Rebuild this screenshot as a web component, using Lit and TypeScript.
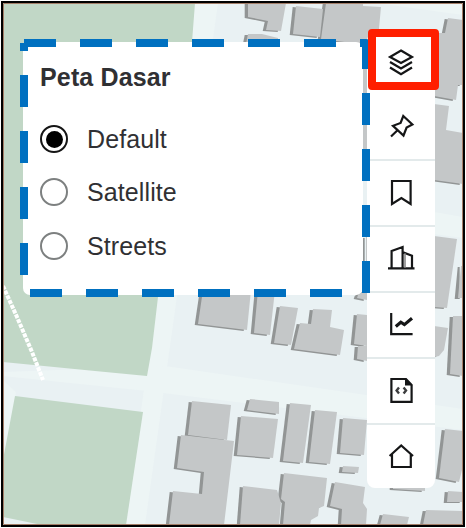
import { LitElement, html, svg, css } from "lit";
import { customElement, state } from "lit/decorators.js";

const BUILDINGS = [
  "248,3 286,3 281,31 266,30 268,21 248,17",
  "296,6 323,9 320,37 293,34",
  "326,3 363,3 363,6 381,7 376,60 367,60 367,152 360,152 360,44 321,39",
  "248,34 262,34 278,38 278,44 246,44",
  "448,18 463,20 463,85 458,85 456,100 434,96 434,33 445,33",
  "434,104 449,106 446,130 463,133 463,184 434,180",
  "434,236 457,239 447,308 434,307",
  "461,266 463,266 463,298 458,298",
  "434,326 448,328 444,350 439,356 434,357",
  "453,316 463,316 463,376 450,374",
  "366,237 368,237 368,262 366,262",
  "358,295 367,289 367,300 357,298",
  "357,314 367,315 367,346 354,344",
  "358,346 367,346 367,361 357,359",
  "203,290 251,290 247,330 198,324",
  "258,290 275,290 270,335 254,333",
  "280,306 298,308 291,345 274,343",
  "313,309 332,310 330,327 344,330 340,355 294,349 300,323 311,324",
  "192,401 231,405 227,440 188,435",
  "181,435 234,441 224,525 169,525 173,491 202,494 204,472 177,468",
  "250,399 279,402 279,414 247,410",
  "241,416 278,419 273,458 237,455",
  "290,403 311,405 303,463 283,461",
  "315,410 337,412 330,464 309,462",
  "343,418 367,420 364,455 340,453",
  "343,466 359,467 358,473 342,472",
  "284,473 327,478 324,506 319,508 318,516 311,520 310,525 283,525 285,502 281,499",
  "243,486 277,490 281,503 279,525 240,525",
  "335,482 365,487 363,503 367,509 366,525 341,525 342,509 330,506",
  "383,514 409,517 407,525 380,525",
  "426,510 463,511 463,525 423,525",
  "445,429 463,431 463,466 459,482 439,478",
  "448,491 463,492 463,502 447,502",
  "393,484 425,487 425,491 393,489",
];

const ICONS = [
  svg`<path d="M15 2.5 26 9 15 15 4 9Z M4 14 15 20.5 26 14 M4 19.5 15 26.2 26 19.5"/>`,
  svg`<path d="M17.3 4 26.4 12.4 20.6 15.6 17.5 23.5 7 13.8 14.6 11Z M5 24.5 11.8 18"/>`,
  svg`<path d="M6 3H24.6V26L15.4 20 6 26Z"/>`,
  svg`<path d="M2 24.4H28.5 M5.6 24V7L16.6 3V24 M17 8.3 26 11.8V24"/><path class="thin" d="M19 9V24"/>`,
  svg`<path d="M5.2 3V24.2H26.6"/><path class="thick" d="M9.8 16.4 14.8 12.2 18.4 14.6 26 8.2"/>`,
  svg`<path d="M5.4 3H20L25.6 9V25.8H5.4Z"/><path class="solid" d="M19 2.5 26.5 9.5H19Z"/><path class="code" d="M13 11.4 10.6 14.4 13 17.4 M17.6 11.4 20 14.4 17.6 17.4"/>`,
  svg`<path d="M3.6 14 15.2 3.4 27 14 M6 12V25H24.8V12"/>`,
];

const BASEMAPS = ["Default", "Satellite", "Streets"];

@customElement("map-canvas")
class MapCanvas extends LitElement {
  static styles = css`
    :host, svg { display: block; }
    .field { fill: #c1d7c6; }
    .road { fill: #edf5f5; }
    .shade { fill: #929595; }
    .block { fill: #c4c7c8; }
    .trail { fill: none; stroke: #fff; stroke-width: 4; stroke-dasharray: 4 1.2; }
  `;

  render() {
    return html`<svg width="466" height="528" viewBox="0 0 466 528">
      <rect width="466" height="528" fill="#e9f1f3"/>
      <polygon class="road" points="195,3 218,3 145,525 126,525"/>
      <polygon class="road" points="3,376 147,391 463,430 463,409 165,366 3,372"/>
      <polygon class="road" points="376,3 463,3 463,15"/>
      <polygon class="road" points="434,212 463,217 463,238 434,234"/>
      <polygon class="road" points="3,380 16,392 3,460"/>
      <polygon class="field" points="3,3 195,3 192,42 158,297 152,348 147,376 95,371 3,362"/>
      <polygon class="field" points="15,396 143,412 126,525 42,525 3,517 3,460"/>
      <path class="trail" d="M3 286 17 317 32 352 43 380"/>
      ${BUILDINGS.map((p) => svg`<polygon class="shade" transform="translate(-3.3 1)" points=${p}/>`)}
      ${BUILDINGS.map((p) => svg`<polygon class="block" points=${p}/>`)}
    </svg>`;
  }
}

@customElement("basemap-panel")
class BasemapPanel extends LitElement {
  @state() selected = "Default";

  static styles = css`
    :host {
      display: block;
      box-sizing: border-box;
      width: 340px;
      height: 253px;
      padding: 20px 18px 0 17px;
      border-radius: 7px;
      background: #fff;
      color: #303033;
      font: 25px/30px "Liberation Sans", Arial, sans-serif;
    }
    .title { margin: 0 0 20px; font-size: 25px; line-height: 30px; font-weight: 700; letter-spacing: 0.15px; white-space: nowrap; }
    .list { display: flex; flex-direction: column; }
    .option { display: flex; align-items: center; gap: 19px; height: 53.3px; box-sizing: border-box; padding-top: 1px; letter-spacing: 0.1px; }
    .radio {
      display: grid;
      place-items: center;
      box-sizing: border-box;
      width: 28px;
      height: 28px;
      border: 2px solid #7d8080;
      border-radius: 50%;
    }
    .checked { border-color: #151515; }
    .checked::after { content: ""; width: 17px; height: 17px; border-radius: 50%; background: #000; }
  `;

  render() {
    return html`<h2 class="title">Peta Dasar</h2>
      <div class="list" role="radiogroup">
        ${BASEMAPS.map((name) => html`<div class="option" role="radio" @click=${() => (this.selected = name)}>
          <span class="radio ${this.selected === name ? "checked" : ""}"></span><span>${name}</span>
        </div>`)}
      </div>`;
  }
}

@customElement("map-toolbar")
class MapToolbar extends LitElement {
  static styles = css`
    :host {
      display: flex;
      flex-direction: column;
      width: 68px;
      height: 455px;
      overflow: hidden;
      border-radius: 8px;
      background: #fff;
    }
    .tool { flex: 0 0 66px; display: grid; place-items: center; box-sizing: border-box; border-bottom: 2px solid #e3eaeb; }
    .tool:first-child { flex-basis: 62px; border-color: #fff; }
    .tool:last-child { flex-basis: 63px; border: 0; }
    svg { display: block; fill: none; stroke: #151617; stroke-width: 2.2; }
    .thin { stroke: #777; stroke-width: 1.4; }
    .thick { stroke-width: 3.2; }
    .code { stroke: #3c3d3e; stroke-width: 2.4; }
    .solid { fill: #151617; stroke: none; }
  `;

  render() {
    return ICONS.map((icon) => html`<div class="tool"><svg width="30" height="30" viewBox="0 0 30 30">${icon}</svg></div>`);
  }
}

@customElement("app-root")
class AppRoot extends LitElement {
  static styles = css`
    :host { display: block; position: relative; width: 466px; height: 528px; overflow: hidden; background: #fff; }
    .overlay { position: absolute; inset: 0; display: flex; align-items: flex-start; gap: 4px; padding-left: 23px; }
    basemap-panel { margin-top: 42px; }
    map-toolbar { margin-top: 33px; }
    .marks { position: absolute; inset: 0; fill: none; pointer-events: none; }
    .dash { stroke: #0070c0; stroke-width: 8; stroke-dasharray: 32 24; stroke-linejoin: round; }
    .focus { stroke: #ff1f00; stroke-width: 8; stroke-linejoin: round; }
    .edge { stroke: #000; stroke-width: 2; }
    .inner { stroke: #a37d68; stroke-width: 1; }
    .outside { stroke: #fff; stroke-width: 1; }
  `;

  render() {
    return html`<map-canvas></map-canvas>
      <div class="overlay"><basemap-panel></basemap-panel><map-toolbar></map-toolbar></div>
      <svg class="marks" width="466" height="528" viewBox="0 0 466 528">
        <path class="outside" d="M.5 .5H465.5V527.5H.5Z"/>
        <path class="inner" d="M3.5 3.5H462.5V524.5H3.5Z"/>
        <path class="edge" d="M2 2H464V526H2Z"/>
        <path class="dash" d="M24 43H366V293H24V43"/>
        <path class="focus" d="M372 33H435V86H372Z"/>
      </svg>`;
  }
}
